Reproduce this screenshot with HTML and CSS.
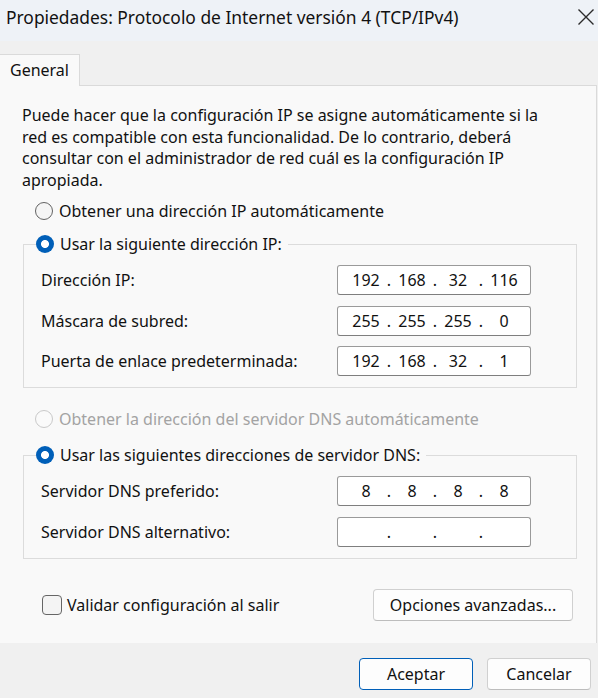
FILE: index.html
```html
<!DOCTYPE html>
<html lang="es">
<head>
<meta charset="utf-8">
<title>Propiedades: Protocolo de Internet versión 4 (TCP/IPv4)</title>
<link rel="stylesheet" href="styles.css">
</head>
<body>
<div class="dialog">
  <div class="titlebar">
    <span class="title">Propiedades: Protocolo de Internet versión 4 (TCP/IPv4)</span>
    <svg class="close" width="18" height="18" viewBox="0 0 18 18"><path d="M1.5 1.5 L16.5 16.5 M16.5 1.5 L1.5 16.5" stroke="#2b2b2b" stroke-width="1.4" fill="none"/></svg>
  </div>
  <div class="tabstrip">
    <div class="tab">General</div>
  </div>
  <div class="panel">
    <p class="intro">Puede hacer que la configuración IP se asigne automáticamente si la red es compatible con esta funcionalidad. De lo contrario, deberá consultar con el administrador de red cuál es la configuración IP apropiada.</p>

    <div class="radio-row first"><span class="radio"></span>Obtener una dirección IP automáticamente</div>

    <fieldset class="group g1">
      <legend class="radio-row"><span class="radio checked"></span>Usar la siguiente dirección IP:</legend>
      <div class="field-row">
        <span class="label">Dirección IP:</span>
        <div class="ip"><span>192</span><i>.</i><span>168</span><i>.</i><span>32</span><i>.</i><span>116</span></div>
      </div>
      <div class="field-row">
        <span class="label">Máscara de subred:</span>
        <div class="ip"><span>255</span><i>.</i><span>255</span><i>.</i><span>255</span><i>.</i><span>0</span></div>
      </div>
      <div class="field-row">
        <span class="label">Puerta de enlace predeterminada:</span>
        <div class="ip"><span>192</span><i>.</i><span>168</span><i>.</i><span>32</span><i>.</i><span>1</span></div>
      </div>
    </fieldset>

    <div class="radio-row disabled"><span class="radio"></span>Obtener la dirección del servidor DNS automáticamente</div>

    <fieldset class="group g2">
      <legend class="radio-row"><span class="radio checked"></span>Usar las siguientes direcciones de servidor DNS:</legend>
      <div class="field-row">
        <span class="label">Servidor DNS preferido:</span>
        <div class="ip"><span>8</span><i>.</i><span>8</span><i>.</i><span>8</span><i>.</i><span>8</span></div>
      </div>
      <div class="field-row">
        <span class="label">Servidor DNS alternativo:</span>
        <div class="ip"><span></span><i>.</i><span></span><i>.</i><span></span><i>.</i><span></span></div>
      </div>
    </fieldset>

    <div class="bottom-row">
      <label class="check-row"><span class="checkbox"></span>Validar configuración al salir</label>
      <button class="btn adv">Opciones avanzadas...</button>
    </div>
  </div>
  <div class="footer">
    <button class="btn primary">Aceptar</button>
    <button class="btn cancel">Cancelar</button>
  </div>
</div>
</body>
</html>
```

FILE: styles.css
```css
* { box-sizing: border-box; }
html, body { margin: 0; padding: 0; }
body {
  width: 598px;
  height: 698px;
  overflow: hidden;
  font-family: "Noto Sans", "Open Sans", sans-serif;
  font-size: 16px;
  color: #111111;
  background: #f0f0f0;
}
.dialog { width: 598px; height: 698px; display: flex; flex-direction: column; }

.titlebar {
  height: 41px;
  background: #eef2f7;
  display: flex;
  align-items: flex-start;
  justify-content: space-between;
  padding: 5px 3px 0 6px;
  font-size: 17.4px;
}
.title { line-height: 24px; }
.close { margin-top: 3px; }

.tabstrip {
  height: 44px;
  background: #f0f0f0;
  display: flex;
  align-items: flex-end;
}
.tab {
  width: 80px;
  height: 32px;
  margin-bottom: -1px;
  background: #f9f9f9;
  border: 1px solid #dadada;
  border-bottom: none;
  border-left: none;
  padding: 4px 0 0 10px;
  line-height: 22px;
  position: relative;
  z-index: 1;
}

.panel {
  height: 558px;
  background: #f9f9f9;
  border-top: 1px solid #dadada;
  border-right: 1px solid #dadada;
  margin-right: 1px;
  padding: 19px 19px 0 22px;
  display: flex;
  flex-direction: column;
}
.intro {
  margin: 0;
  width: 526px;
  line-height: 21.5px;
}

.radio-row {
  display: flex;
  align-items: center;
  height: 22px;
  line-height: 22px;
  white-space: nowrap;
}
.radio-row.first { margin: 9px 0 0 13px; }
.radio-row.disabled { margin: 20px 0 0 13px; color: #a3a3a3; }
.radio {
  width: 18px;
  height: 18px;
  border-radius: 50%;
  border: 1.5px solid #636363;
  background: #f5f5f5;
  margin-right: 6px;
  flex: none;
}
.disabled .radio { border-color: #c9c9c9; background: #fafafa; }
.radio.checked {
  border: none;
  background: radial-gradient(circle, #ffffff 0 3.6px, #005fb8 4.4px);
}

.group {
  margin: 0 0 0 1px;
  border: 1px solid #dcdcdc;
  padding: 0 0 11px 0;
  min-width: 0;
}
.group legend {
  margin-left: 12px;
  padding: 0 6px 0 0;
}
.g1 { margin-top: 11px; }
.g2 { margin-top: 14px; }

.field-row {
  display: flex;
  align-items: center;
  justify-content: space-between;
  padding: 0 45px 0 17px;
  height: 30px;
  margin-top: 10.5px;
}
.g1 .field-row:first-of-type, .g2 .field-row:first-of-type { margin-top: 10px; }
.label { white-space: nowrap; }

.ip {
  width: 194px;
  height: 30px;
  background: #ffffff;
  border: 1px solid #9a9a9a;
  border-bottom-color: #7e7e7e;
  border-radius: 3px;
  display: grid;
  grid-template-columns: 36px 10px 36px 10px 36px 10px 36px;
  padding-left: 10px;
  align-items: center;
  line-height: 28px;
}
.ip span { text-align: center; }
.ip i { font-style: normal; text-align: center; }

.bottom-row {
  margin-top: 30px;
  display: flex;
  align-items: center;
  justify-content: space-between;
  padding: 0 4px 0 20px;
}
.check-row { display: flex; align-items: center; line-height: 22px; }
.checkbox {
  width: 20px;
  height: 20px;
  border: 1.5px solid #666666;
  border-radius: 4px;
  background: #f4f4f4;
  margin-right: 5px;
}

.btn {
  font: inherit;
  color: #111111;
  background: #fdfdfd;
  border: 1px solid #d0d0d0;
  border-bottom-color: #bdbdbd;
  border-radius: 4px;
  height: 32px;
  padding: 0;
}
.adv { width: 200px; }

.footer {
  flex: 1;
  background: #f0f0f0;
  display: flex;
  justify-content: flex-end;
  align-items: flex-start;
  gap: 14px;
  padding: 15px 7px 0 0;
}
.primary { width: 114px; border: 1.5px solid #005fb8; }
.cancel { width: 104px; }
```
